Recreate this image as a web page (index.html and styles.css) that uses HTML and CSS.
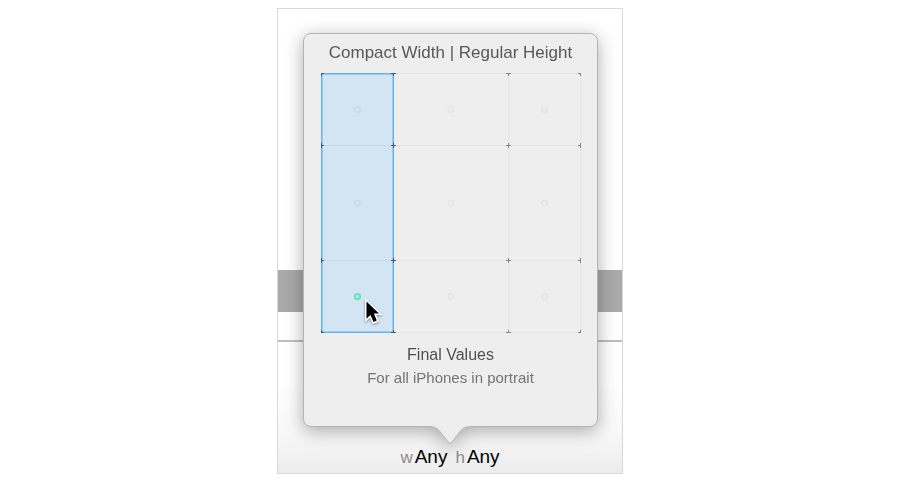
FILE: index.html
```html
<!DOCTYPE html>
<html lang="en">
<head>
<meta charset="utf-8">
<title>Size Classes</title>
<link rel="stylesheet" href="styles.css">
</head>
<body>
<main class="editor">
  <div class="canvas"><div class="band"></div></div>
  <footer class="toolbar">
    <button class="size-button" type="button"><span class="axis">w</span>Any<span class="axis axis-h">h</span>Any</button>
  </footer>
  <section class="popover" aria-label="Size class">
    <h1 class="title">Compact Width | Regular Height</h1>
    <div class="picker">
      <svg class="grid" viewBox="0 0 260 260" aria-hidden="true">
        <path class="line" d="M0 .5H260M0 72.5H260M0 187.5H260M0 259.5H260M.5 0V260M72.5 0V260M187.5 0V260M259.5 0V260"/>
        <rect class="selection" x=".75" y=".75" width="71.5" height="258.5"/>
        <path class="tint-line" d="M2 72.5H71M2 187.5H71"/>
        <g class="dot">
          <circle cx="36.5" cy="36.5" r="2.8"/><circle cx="130" cy="36.5" r="2.8"/><circle cx="223.500" cy="36.5" r="2.8"/>
          <circle cx="36.5" cy="130" r="2.8"/><circle cx="130" cy="130" r="2.8"/><circle cx="223.500" cy="130" r="2.8"/>
          <circle cx="130" cy="223.500" r="2.8"/><circle cx="223.500" cy="223.500" r="2.8"/>
        </g>
        <circle class="dot-active" cx="36.5" cy="223.500" r="2.8"/>
        <path class="tick" d="M185 .5H190M187.5 0V3M257 .5H260M259.5 0V3M185 72.5H190M187.5 70V75M257 72.5H260M259.5 70V75M185 187.5H190M187.5 185V190M257 187.5H260M259.5 185V190M185 259.5H190M187.5 257V260M257 259.5H260M259.5 257V260"/>
        <path class="tick tick-dark" d="M0 .5H3M.5 0V3M70 .5H75M72.5 0V3M0 72.5H3M.5 70V75M70 72.5H75M72.5 70V75M0 187.5H3M.5 185V190M70 187.5H75M72.5 185V190M0 259.5H3M.5 257V260M70 259.5H75M72.5 257V260"/>
      </svg>
      <svg class="cursor" viewBox="0 0 20 28" aria-hidden="true">
        <path class="cursor-edge" d="M1 1V25.200L6 20.700L8.700 27L15 24.400L12.300 18H18.500Z"/>
        <path d="M2.500 4.500V21.800L6.500 18L9.500 25L12.800 23.500L9.900 16.500H15Z"/>
      </svg>
    </div>
    <h2 class="subtitle">Final Values</h2>
    <p class="note">For all iPhones in portrait</p>
    <svg class="arrow" viewBox="0 0 48 20" aria-hidden="true">
      <path class="arrow-fill" d="M2 0V1.500C9 1.500 11 3 14 6.500L22 17Q24 19.500 26 17L34 6.500C37 3 39 1.500 46 1.500V0Z"/>
      <path class="arrow-edge" d="M2 1.500C9 1.500 11 3 14 6.500L22 17Q24 19.500 26 17L34 6.500C37 3 39 1.500 46 1.500"/>
    </svg>
  </section>
</main>
</body>
</html>
```

FILE: styles.css
```css
* { box-sizing: border-box; }

body {
  margin: 0;
  padding: 8px;
  background: #fff;
  font-family: "Liberation Sans", Arial, sans-serif;
}

.editor {
  position: relative;
  display: flex;
  flex-direction: column;
  width: 100%;
  max-width: 346px;
  min-height: 466px;
  margin: 0 auto;
  border: 1px solid #d8d8d8;
}

.canvas {
  padding: 261px 0 28px;
  border-bottom: 2px solid #bebebe;
}

.band {
  height: 42px;
  background: #aaa;
}

.toolbar {
  flex: 1;
  display: flex;
  justify-content: center;
  align-items: flex-end;
  padding-bottom: 4px;
  background: linear-gradient(#fff 30%, #f8f8f8 70%, #ececec);
}

.size-button {
  padding: 0;
  border: 0;
  background: none;
  color: #000;
  font: 19px/22px "Liberation Sans", Arial, sans-serif;
}

.axis {
  margin-right: 2px;
  color: #8c8c8c;
  font-size: 17px;
}

.axis-h { margin-left: 8px; }

.popover {
  position: absolute;
  top: 24px;
  left: 25px;
  right: 24px;
  height: 394px;
  padding-top: 8px;
  border: 1px solid #b4b4b4;
  border-radius: 8px;
  background: #eee;
  text-align: center;
  filter: drop-shadow(0 4px 9px rgba(0, 0, 0, 0.32));
}

.title,
.subtitle,
.note {
  margin: 0;
  font-weight: 400;
}

.title {
  color: #585858;
  font-size: 17px;
  line-height: 22px;
}

.picker {
  position: relative;
  width: 260px;
  margin: 9px auto 11px;
}

.grid {
  display: block;
  width: 100%;
}

.line,
.tint-line,
.dot,
.tick { fill: none; }

.line { stroke: #e5e5e5; }
.tint-line { stroke: #c9dae7; }
.selection { fill: #d3e4f2; stroke: #5eb2f5; stroke-width: 1.5; }
.dot { stroke: #000; stroke-opacity: 0.04; stroke-width: 1.5; }
.dot-active { fill: #b5ead9; stroke: #54e3ae; stroke-width: 1.5; }
.tick { stroke: #858585; }
.tick-dark { stroke: #46586a; }

.cursor {
  position: absolute;
  left: 43px;
  top: 224px;
  width: 20px;
  height: 28px;
  filter: drop-shadow(0 1px 1px rgba(0, 0, 0, 0.4));
}

.cursor-edge { fill: #fff; }

.subtitle {
  color: #505050;
  font-size: 16px;
  line-height: 22px;
}

.note {
  margin-top: 1px;
  color: #747474;
  font-size: 15px;
  line-height: 22px;
}

.arrow {
  position: absolute;
  top: 391px;
  left: 50%;
  width: 48px;
  height: 20px;
  margin-left: -25px;
}

.arrow-fill { fill: #eee; }
.arrow-edge { fill: none; stroke: #b4b4b4; }
```
